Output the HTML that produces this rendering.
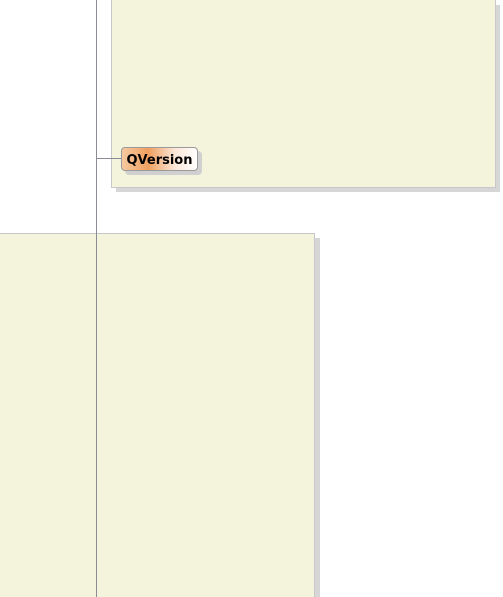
<!DOCTYPE html>
<html><head><style>
html,body{margin:0;padding:0;width:503px;height:597px;overflow:hidden;background:#fff;position:relative}
div{position:absolute;box-sizing:border-box}
.panel{background:#f4f4dc;border:1px solid #c8c8cc}
.sh{background:#d6d6d6}
</style></head><body>
<div class="sh" style="left:116px;top:5px;width:384px;height:187px"></div>
<div class="panel" style="left:111px;top:-2px;width:385px;height:190px"></div>
<div class="sh" style="left:5px;top:238px;width:315px;height:370px"></div>
<div class="panel" style="left:-2px;top:233px;width:317px;height:370px"></div>
<div style="left:96px;top:0;width:1px;height:597px;background:#8c8c94"></div>
<div style="left:96px;top:158px;width:26px;height:1px;background:#8c8c94"></div>
<div style="left:125px;top:151px;width:77px;height:24px;background:#d0d0d0;border-radius:4px"></div>
<div style="left:121px;top:147px;width:77px;height:24px;border:1px solid #9a9a9a;border-radius:4px;background:linear-gradient(to right,#f6c9a0 0%,#f0a060 35%,#fbe6d6 70%,#fff 100%);font:bold 13px 'DejaVu Sans','Liberation Sans',sans-serif;color:#000;line-height:25px;text-align:center;letter-spacing:0">QVersion</div>
</body></html>
